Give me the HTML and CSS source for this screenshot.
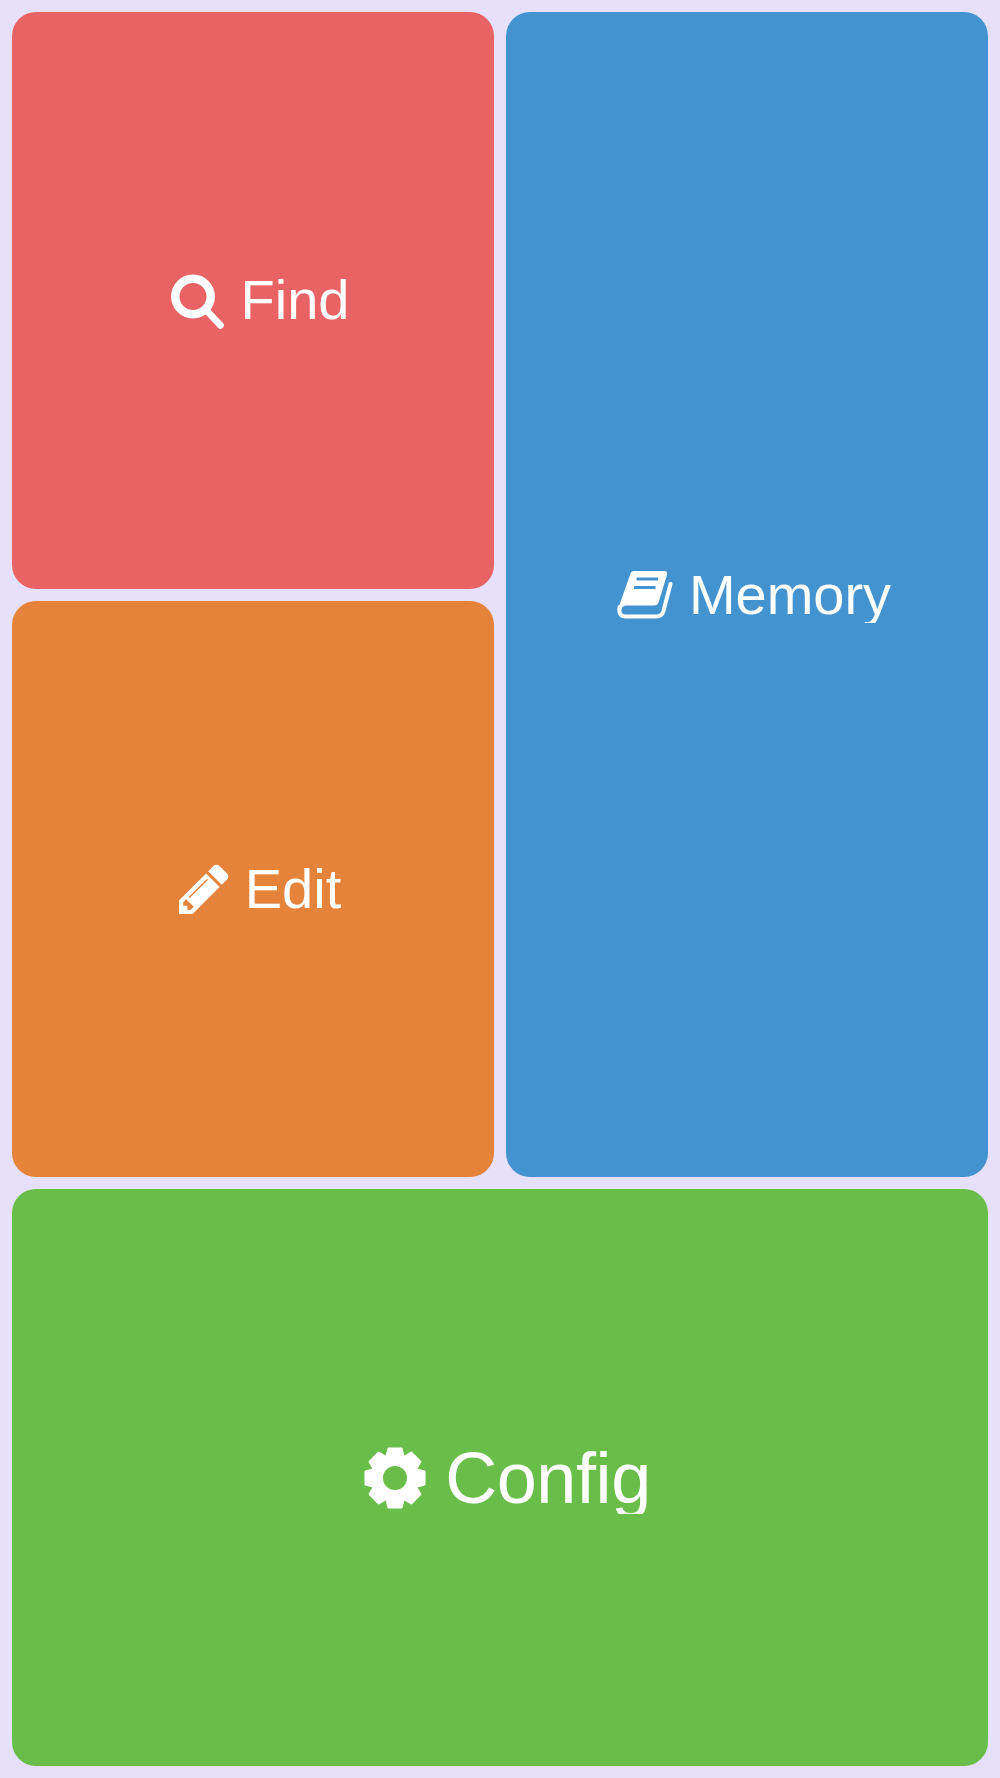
FILE: index.html
```html
<!DOCTYPE html>
<html lang="en">
<head>
<meta charset="UTF-8">
<meta name="viewport" content="width=device-width, initial-scale=1.0">
<title>Menu</title>
<link rel="stylesheet" href="styles.css">
</head>
<body>
<div id="menu-grid">
  <!-- Find -->
  <div class="tile tile-find">
    <svg class="icon icon-find" viewBox="0 0 54 58" aria-hidden="true">
      <circle cx="22" cy="25.500" r="17.700" fill="none" stroke="#fff" stroke-width="8.400"/>
      <line x1="36" y1="40" x2="49.500" y2="54.300" stroke="#fff" stroke-width="6.800" stroke-linecap="round"/>
    </svg>
    <span class="label">Find</span>
  </div>
  <!-- Memory -->
  <div class="tile tile-memory">
    <svg class="icon icon-memory" viewBox="5 8 56 49" aria-hidden="true">
      <path fill="#fff" d="M22 9H52Q56 9 55 13L47 39Q46 43.500 42 43.500H14Q10 43.500 9.500 48L6 47L18 13Q19 9 22 9Z"/>
      <path fill="none" stroke="#fff" stroke-width="4" stroke-linecap="round" d="M7.500 45Q6 54.500 14 54.500H44Q50 54.500 51.500 49L58.500 22"/>
      <path fill="none" stroke="#4293cf" stroke-width="3" d="M24.500 17H46M22 25.500H43.500"/>
    </svg>
    <span class="label">Memory</span>
  </div>
  <!-- Edit -->
  <div class="tile tile-edit">
    <svg class="icon icon-edit" viewBox="128 128 1536 1536" aria-hidden="true">
      <path fill="#fff" d="M491 1536l91-91-235-235-91 91v107h128v128h107zm523-928q0-22-22-22-10 0-17 7l-542 542q-7 7-7 17 0 22 22 22 10 0 17-7l542-542q7-7 7-17zm-54-192l416 416-832 832h-416v-416zm683 96q0 53-37 90l-166 166-416-416 166-165q36-38 90-38 53 0 91 38l235 234q37 39 37 91z"/>
    </svg>
    <span class="label">Edit</span>
  </div>
  <!-- Config -->
  <div class="tile tile-config">
    <svg class="icon icon-config" viewBox="-32 -32 64 64" aria-hidden="true">
      <defs>
        <polygon id="tooth" points="-9,-20 -6.500,-29.500 6.500,-29.500 9,-20" fill="#fff" stroke="#fff" stroke-width="2" stroke-linejoin="round"/>
      </defs>
      <circle r="18" fill="none" stroke="#fff" stroke-width="12"/>
      <use href="#tooth"/>
      <use href="#tooth" transform="rotate(45)"/>
      <use href="#tooth" transform="rotate(90)"/>
      <use href="#tooth" transform="rotate(135)"/>
      <use href="#tooth" transform="rotate(180)"/>
      <use href="#tooth" transform="rotate(225)"/>
      <use href="#tooth" transform="rotate(270)"/>
      <use href="#tooth" transform="rotate(315)"/>
    </svg>
    <span class="label">Config</span>
  </div>
</div>
</body>
</html>
```
FILE: styles.css
```css
html, body {
  height: 100%;
}

body {
  margin: 0;
  background: #e6e0fc;
  font-family: "Liberation Sans", Arial, sans-serif;
  font-variant-ligatures: none;
  color: #fff;
}

#menu-grid {
  box-sizing: border-box;
  height: 100%;
  padding: 12px;
  display: grid;
  grid-template-columns: 1fr 1fr;
  grid-template-rows: 1fr 1fr 1fr;
  gap: 12px;
}

.tile {
  display: flex;
  justify-content: center;
  align-items: center;
  gap: 16px;
  border-radius: 24px;
  font-size: 56px;
}

.tile-find {
  background: #e96264;
}

.tile-memory {
  grid-column: 2;
  grid-row: 1 / span 2;
  background: #4293cf;
}

.tile-edit {
  background: #e5833b;
}

.tile-config {
  grid-column: 1 / span 2;
  gap: 18px;
  background: #69be4a;
  font-size: 72px;
  letter-spacing: -0.4px;
}

.label {
  line-height: 1;
  overflow: hidden;
}

.icon {
  margin-left: 14px;
}

.icon-find {
  width: 54px;
  height: 58px;
}

.icon-memory {
  width: 56px;
  height: 49px;
}

.icon-edit {
  width: 50px;
  height: 50px;
}

.icon-config {
  width: 64px;
  height: 64px;
}
```
